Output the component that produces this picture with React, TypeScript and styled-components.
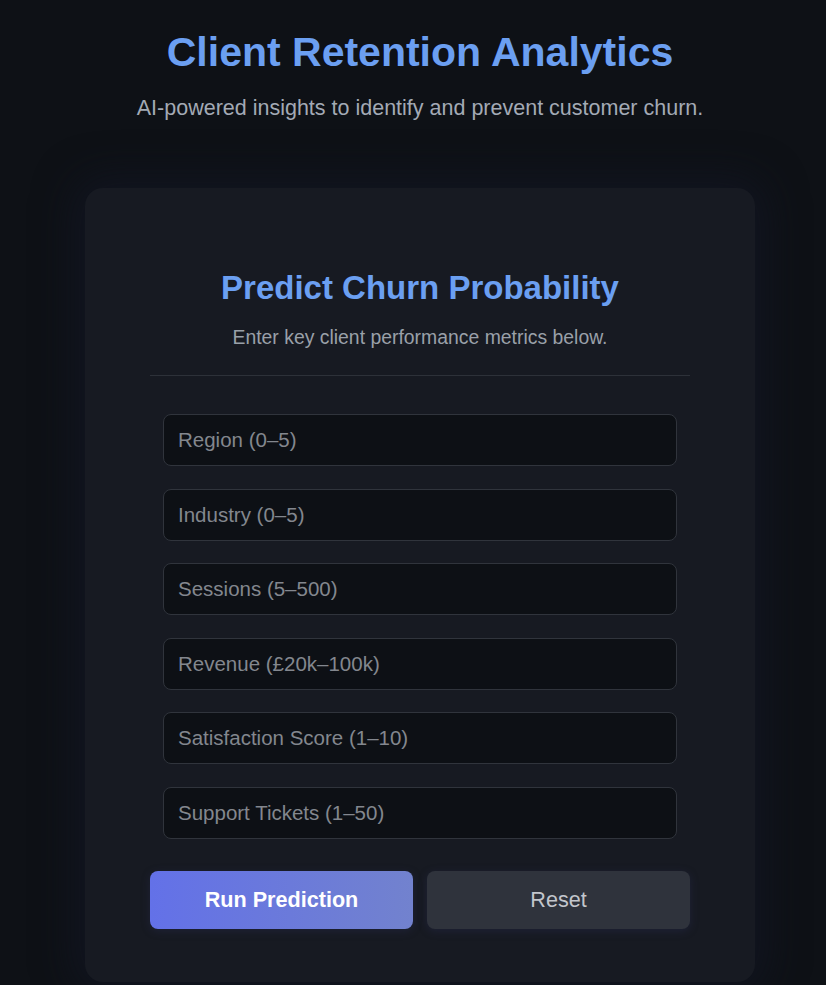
import styled, { createGlobalStyle } from "styled-components";

const GlobalStyle = createGlobalStyle`
  * {
    box-sizing: border-box;
  }

  body {
    margin: 0;
    background-color: #0e1116;
    font-family: "Liberation Sans", Arial, sans-serif;
    color: #c9d1d9;
  }
`;

const Page = styled.main`
  min-height: 985px;
  display: flex;
  flex-direction: column;
  align-items: center;
  padding: 28px 0 0 14px;
`;

const Title = styled.h1`
  margin: 0;
  font-size: 41px;
  font-weight: 700;
  line-height: 48px;
  color: #6b9ff1;
`;

const Subtitle = styled.p`
  margin: 19px 0 0;
  font-size: 21.5px;
  line-height: 26px;
  color: #a3aab5;
`;

const Card = styled.section`
  width: 670px;
  margin-top: 67px;
  padding: 81px 65px 53px;
  background-color: #171a22;
  border-radius: 18px;
  box-shadow: 0 0 40px 10px rgba(20, 24, 40, 0.6);
`;

const CardTitle = styled.h2`
  margin: 0;
  text-align: center;
  font-size: 33px;
  font-weight: 700;
  line-height: 38px;
  color: #6b9ff1;
`;

const CardText = styled.p`
  margin: 18px 0 0;
  text-align: center;
  font-size: 19.4px;
  line-height: 24px;
  color: #9aa0a9;
`;

const Divider = styled.hr`
  margin: 26px 0 38px;
  border: none;
  border-top: 1px solid #2d3139;
`;

const Form = styled.form`
  display: flex;
  flex-direction: column;
`;

const Fields = styled.div`
  display: flex;
  flex-direction: column;
  gap: 22.6px;
  padding: 0 13px;
`;

const Input = styled.input`
  width: 100%;
  height: 52px;
  padding: 0 14px;
  background-color: #0d1015;
  border: 1px solid #30343c;
  border-radius: 8px;
  font-family: inherit;
  font-size: 20.5px;
  color: #c9d1d9;
  outline: none;

  &::placeholder {
    color: #83878e;
  }
`;

const Actions = styled.div`
  display: grid;
  grid-template-columns: 1fr 1fr;
  gap: 14px;
  margin-top: 32px;
`;

const Button = styled.button<{ $primary?: boolean }>`
  height: 58px;
  border: none;
  border-radius: 8px;
  font-family: inherit;
  font-size: 21.6px;
  font-weight: ${({ $primary }) => ($primary ? 700 : 400)};
  color: ${({ $primary }) => ($primary ? "#ffffff" : "#c3c6cc")};
  background: ${({ $primary }) =>
    $primary ? "linear-gradient(90deg, #6371e8, #7282ce)" : "#2f333c"};
  box-shadow: 0 2px 8px rgba(40, 45, 80, 0.45);
  cursor: pointer;
`;

const fields = [
  "Region (0–5)",
  "Industry (0–5)",
  "Sessions (5–500)",
  "Revenue (£20k–100k)",
  "Satisfaction Score (1–10)",
  "Support Tickets (1–50)",
];

export default function App() {
  return (
    <>
      <GlobalStyle />
      <Page>
        <Title>Client Retention Analytics</Title>
        <Subtitle>
          AI-powered insights to identify and prevent customer churn.
        </Subtitle>

        <Card>
          <CardTitle>Predict Churn Probability</CardTitle>
          <CardText>Enter key client performance metrics below.</CardText>
          <Divider />

          <Form onSubmit={(e) => e.preventDefault()}>
            <Fields>
              {fields.map((label) => (
                <Input key={label} type="number" placeholder={label} />
              ))}
            </Fields>
            <Actions>
              <Button type="submit" $primary>
                Run Prediction
              </Button>
              <Button type="reset">Reset</Button>
            </Actions>
          </Form>
        </Card>
      </Page>
    </>
  );
}
